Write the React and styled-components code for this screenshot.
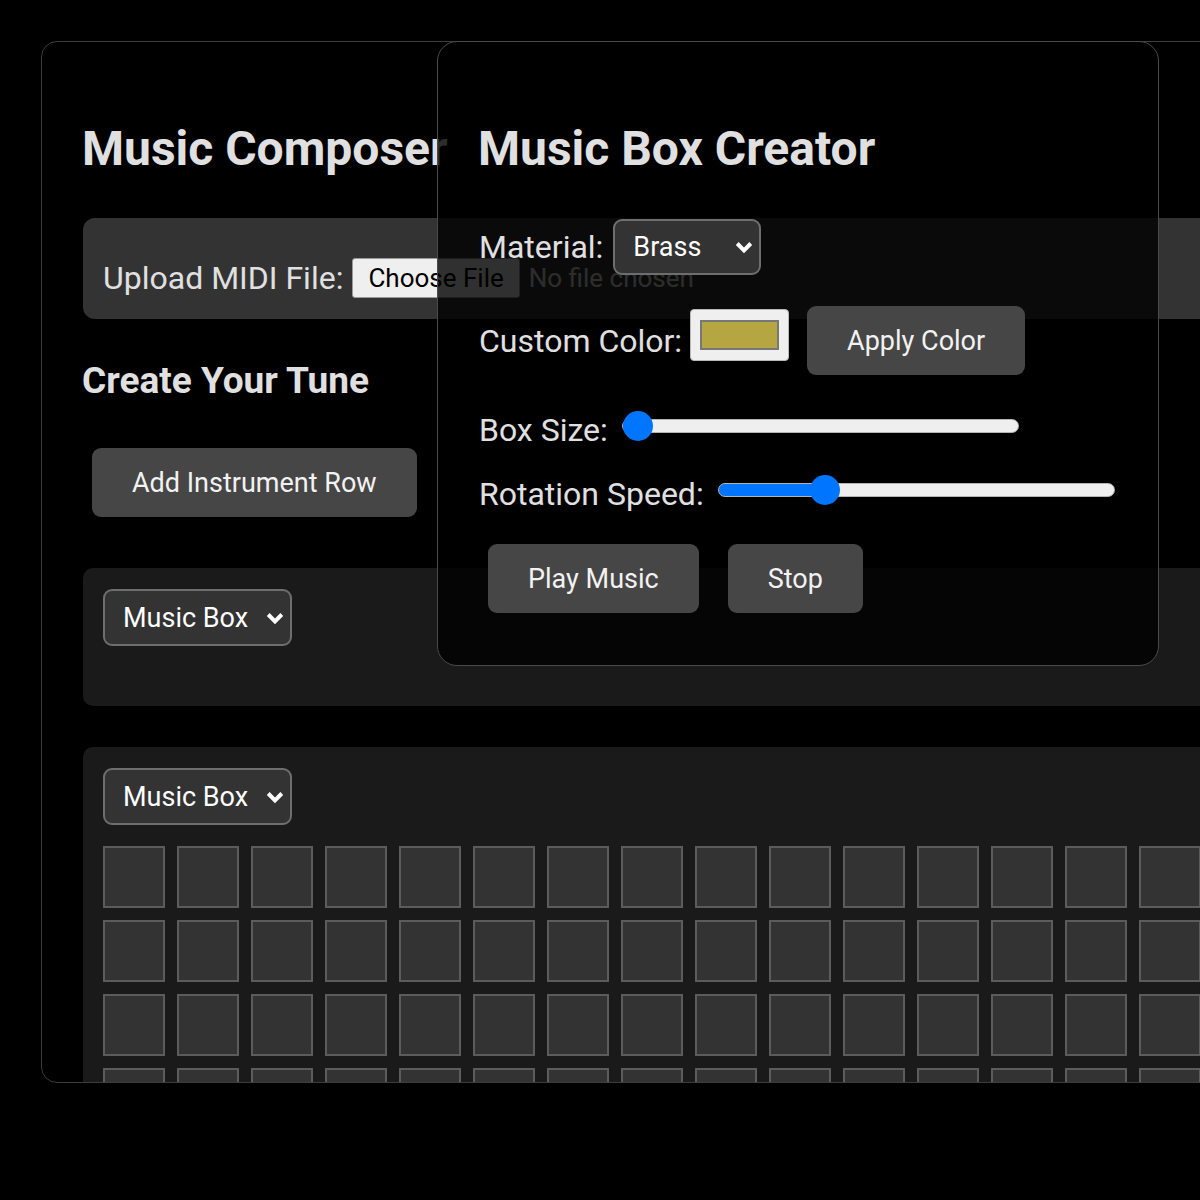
import React, { useState } from 'react'
import styled, { createGlobalStyle } from 'styled-components'

const GlobalStyle = createGlobalStyle`
    body {
        margin: 0;
        background: #000;
        overflow: hidden;
        font-family: Roboto, "Liberation Sans", sans-serif;
        color: #e0e0e0;
    }
`;

const Page = styled.div`
    position: relative;
    padding: 41px 0 0 41px;
    width: 1200px;
    height: 1200px;
    box-sizing: border-box;
    overflow: hidden;
`;

const Composer = styled.div`
    width: 1400px;
    height: 1042px;
    box-sizing: border-box;
    border: 1px solid #3c3c3c;
    border-radius: 16px;
    padding: 0 41px;
    overflow: hidden;
`;

const Title = styled.h1`
    font-size: 48px;
    line-height: 56px;
    font-weight: 700;
    color: #e0e0e0;
    margin: 79px 0 0 -1px;
`;

const UploadBox = styled.div`
    display: flex;
    align-items: center;
    height: 101px;
    box-sizing: border-box;
    margin-top: 41px;
    padding: 18px 20px 0;
    background: #333;
    border-radius: 12px;
`;

const Label = styled.label`
    font-size: 32px;
    line-height: 38px;
    color: #e0e0e0;
    margin-right: ${p => p.$gap || 9}px;
    white-space: nowrap;
`;

const FileInput = styled.input.attrs({ type: 'file' })`
    font-family: Roboto, sans-serif;
    font-size: 26px;
    color: #e0e0e0;

    &::file-selector-button {
        font-family: Roboto, sans-serif;
        font-size: 26px;
        color: #000;
        background: #efefef;
        border: 1px solid #9a9a9a;
        border-radius: 3px;
        height: 40px;
        padding: 0 15px;
        margin-right: 9px;
    }
`;

const SubTitle = styled.h2`
    font-size: 37px;
    line-height: 42px;
    font-weight: 700;
    color: #e0e0e0;
    margin: 41px 0 46px -1px;
`;

const Button = styled.button`
    height: 69px;
    padding: 0 40px;
    margin-left: ${p => p.$ml ?? 0}px;
    border: none;
    border-radius: 9px;
    background: #464646;
    color: #f2f2f2;
    font-family: Roboto, sans-serif;
    font-size: 27px;
    white-space: nowrap;
    cursor: pointer;
`;

const AddRow = styled.div`
    margin-left: 9px;
`;

const InstrumentRow = styled.div`
    margin-top: ${p => p.$mt}px;
    padding: 21px 20px 20px;
    background: #1a1a1a;
    border-radius: 10px;
`;

const SelectWrap = styled.div`
    position: relative;
    display: inline-block;
    width: ${p => p.$w}px;
    height: ${p => p.$h}px;
`;

const Select = styled.select`
    appearance: none;
    width: 100%;
    height: 100%;
    box-sizing: border-box;
    padding: 0 40px 0 18px;
    background: #333;
    color: #fff;
    border: 2px solid #6e6e6e;
    border-radius: 9px;
    font-family: Roboto, sans-serif;
    font-size: 27px;
`;

const Chevron = styled.svg`
    position: absolute;
    right: 8px;
    top: 50%;
    width: 18px;
    height: 13px;
    margin-top: -6px;
    pointer-events: none;
`;

const Grid = styled.div`
    display: grid;
    grid-template-columns: repeat(16, 62px);
    grid-auto-rows: 62px;
    gap: 12px;
    margin: 21px 0 19px;
`;

const Cell = styled.div`
    box-sizing: border-box;
    border: 2px solid #5c5c5c;
    background: ${p => (p.$on ? '#b5a642' : '#333')};
    cursor: pointer;
`;

const Panel = styled.div`
    position: absolute;
    left: 437px;
    top: 41px;
    width: 722px;
    box-sizing: border-box;
    padding: 0 41px 42px;
    border: 1px solid #4a4a4a;
    border-radius: 20px;
    background: rgba(0, 0, 0, 0.8);
`;

const FieldRow = styled.div`
    display: flex;
    align-items: center;
    margin-top: ${p => p.$mt}px;
`;

const ColorInput = styled.input.attrs({ type: 'color' })`
    width: 99px;
    height: 52px;
    box-sizing: border-box;
    padding: 10px 9px;
    margin: 0 0 11px;
    background: #efefef;
    border: 1px solid #b8b8b8;
    border-radius: 4px;
    cursor: pointer;

    &::-webkit-color-swatch-wrapper {
        padding: 0;
    }
    &::-webkit-color-swatch {
        border: 2px solid #777;
        border-radius: 0;
    }
`;

const Slider = styled.input.attrs({ type: 'range' })`
    -webkit-appearance: none;
    appearance: none;
    width: 397px;
    height: 30px;
    margin: 0 0 8px 5px;
    background: transparent;

    &::-webkit-slider-runnable-track {
        height: 14px;
        border-radius: 7px;
        box-sizing: border-box;
        border: 1px solid #b4b4b4;
        background: linear-gradient(to right, #0075ff 0 var(--fill), #efefef var(--fill));
    }
    &::-webkit-slider-thumb {
        -webkit-appearance: none;
        width: 30px;
        height: 30px;
        margin-top: -9px;
        border-radius: 50%;
        background: #0075ff;
    }
`;

const ButtonRow = styled.div`
    display: flex;
    gap: 29px;
    margin: 31px 0 10px 9px;
`;

const ChevronIcon = () => (
    <Chevron viewBox="0 0 18 13">
        <path d="M2.2 2.5 L9 9.3 L15.8 2.5" fill="none" stroke="#fff" strokeWidth="4" />
    </Chevron>
);

const InstrumentSelect = ({ value, onChange, width, height, options }) => (
    <SelectWrap $w={width} $h={height}>
        <Select value={value} onChange={onChange}>
            {options.map(o => <option key={o}>{o}</option>)}
        </Select>
        <ChevronIcon />
    </SelectWrap>
);

const instruments = ['Music Box', 'Piano', 'Bells', 'Harp'];

const App = () => {
    const [rows, setRows] = useState([
        { instrument: 'Music Box', cells: 0 },
        { instrument: 'Music Box', cells: 64 },
    ]);
    const [material, setMaterial] = useState('Brass');
    const [color, setColor] = useState('#b5a642');
    const [boxSize, setBoxSize] = useState(0);
    const [speed, setSpeed] = useState(25);

    const fill = (v) => `${(15 + (v / 100) * 367) / 397 * 100}%`;

    const setInstrument = (i, value) => {
        setRows(rows.map((r, idx) => (idx === i ? { ...r, instrument: value } : r)));
    };

    return (
        <Page>
            <GlobalStyle />
            <Composer>
                <Title>Music Composer</Title>
                <UploadBox>
                    <Label>Upload MIDI File:</Label>
                    <FileInput accept=".mid,.midi" />
                </UploadBox>
                <SubTitle>Create Your Tune</SubTitle>
                <AddRow>
                    <Button onClick={() => setRows([...rows, { instrument: 'Music Box', cells: 64 }])}>
                        Add Instrument Row
                    </Button>
                </AddRow>
                {rows.map((row, i) => (
                    <InstrumentRow key={i} $mt={i === 0 ? 51 : 41}>
                        <InstrumentSelect
                            width={189}
                            height={57}
                            value={row.instrument}
                            options={instruments}
                            onChange={(e) => setInstrument(i, e.target.value)}
                        />
                        <Grid>
                            {Array.from({ length: row.cells }).map((_, c) => <Cell key={c} />)}
                        </Grid>
                    </InstrumentRow>
                ))}
            </Composer>

            <Panel>
                <Title>Music Box Creator</Title>
                <FieldRow $mt={42}>
                    <Label $gap={10}>Material:</Label>
                    <InstrumentSelect
                        width={148}
                        height={56}
                        value={material}
                        options={['Brass', 'Silver', 'Gold', 'Wood']}
                        onChange={(e) => setMaterial(e.target.value)}
                    />
                </FieldRow>
                <FieldRow $mt={31}>
                    <Label $gap={8}>Custom Color:</Label>
                    <ColorInput value={color} onChange={(e) => setColor(e.target.value)} />
                    <Button $ml={18}>Apply Color</Button>
                </FieldRow>
                <FieldRow $mt={36}>
                    <Label>Box Size:</Label>
                    <Slider
                        min="0"
                        max="100"
                        value={boxSize}
                        onChange={(e) => setBoxSize(+e.target.value)}
                        style={{ '--fill': fill(boxSize) }}
                    />
                </FieldRow>
                <FieldRow $mt={26}>
                    <Label>Rotation Speed:</Label>
                    <Slider
                        min="0"
                        max="100"
                        value={speed}
                        onChange={(e) => setSpeed(+e.target.value)}
                        style={{ '--fill': fill(speed) }}
                    />
                </FieldRow>
                <ButtonRow>
                    <Button>Play Music</Button>
                    <Button>Stop</Button>
                </ButtonRow>
            </Panel>
        </Page>
    );
};

export default App
